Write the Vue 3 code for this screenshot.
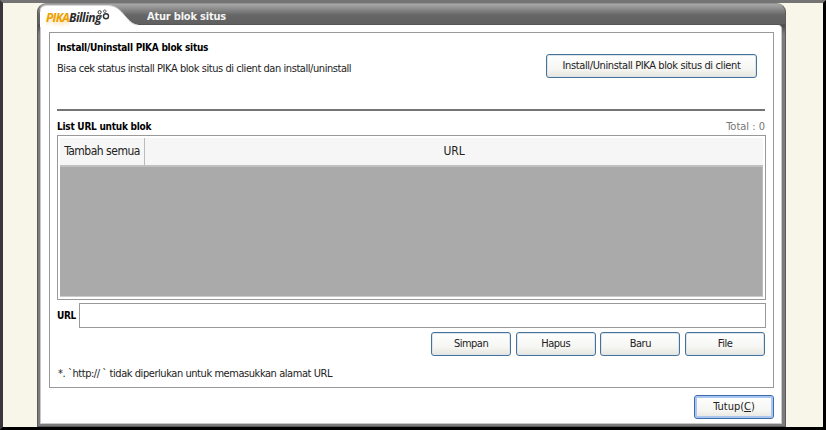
<script setup>
const actions = ['Simpan', 'Hapus', 'Baru', 'File']
</script>

<template>
  <div class="screen">
    <main class="window">
      <header class="titlebar">
        <svg class="tab" width="100" height="24" viewBox="0 0 100 24" aria-hidden="true">
          <path d="M0 24V9Q0 2.5 7 2.5H67C76 2.5 80 7 85 13C90 19 93 21.5 98 22V24Z" fill="#fff" />
          <path d="M0 9Q0 2.5 7 2.5H67C76 2.5 80 7 85 13C90 19 93 21.5 98 22" fill="none" stroke="#d8d8d8" stroke-width="1" />
        </svg>
        <div class="logo"><span class="pika">PIKA</span><span class="billing">Billing</span></div>
        <svg class="rings" width="14" height="13" viewBox="0 0 14 13" fill="none" stroke="#333" aria-hidden="true">
          <circle cx="2.6" cy="3.2" r="1.6" stroke-width="1" />
          <circle cx="7.8" cy="2.2" r="1.3" stroke="#666" stroke-width="1" />
          <circle cx="9" cy="7.3" r="2.5" stroke-width="1.4" />
          <circle cx="3.6" cy="7.4" r="1.2" stroke="#777" stroke-width="1" />
        </svg>
        <h1 class="title">Atur blok situs</h1>
      </header>
      <div class="body">
        <section class="panel">
          <div class="intro">
            <div>
              <h2>Install/Uninstall PIKA blok situs</h2>
              <p class="desc">Bisa cek status install PIKA blok situs di client dan install/uninstall</p>
            </div>
            <button class="btn install">Install/Uninstall PIKA blok situs di client</button>
          </div>
          <div class="caption">
            <h2>List URL untuk blok</h2>
            <span class="total">Total : 0</span>
          </div>
          <div class="grid">
            <div class="grid-head">
              <div class="col first">Tambah semua</div>
              <div class="col">URL</div>
            </div>
            <div class="grid-body"></div>
          </div>
          <div class="entry">
            <label for="url">URL</label>
            <input id="url" type="text" />
          </div>
          <div class="actions">
            <button v-for="a in actions" :key="a" class="btn">{{ a }}</button>
          </div>
          <p class="note">*. `http:// ` tidak diperlukan untuk memasukkan alamat URL</p>
        </section>
        <footer class="foot">
          <button class="btn close"><span>Tutup(<u>C</u>)</span></button>
        </footer>
      </div>
    </main>
  </div>
</template>

<style>
body { margin: 0; overflow: hidden; }
</style>

<style scoped>
* { box-sizing: border-box; }
h1, h2, p { margin: 0; font-size: 11px; }
.screen {
  width: 826px; height: 430px;
  background: #f8f6e8;
  border: 3px solid;
  border-color: #747474 #000 #000 #39373b;
  padding-left: 34px;
  font-family: "DejaVu Sans Condensed", "DejaVu Sans", sans-serif;
  font-stretch: condensed;
  font-size: 11px;
  color: #222;
}
.window {
  width: 749px; height: 424px;
  border-radius: 9px 9px 0 0;
  background: linear-gradient(#a8a8a8 0, #8b8b8b 5px, #666 11px, #606060 20px, #4c4848 21px, #7c7c7c 30px);
  border: 1px solid #5a5a5a;
  border-top-color: #929292;
  padding: 0 3px 2px 2px;
}
.titlebar { position: relative; height: 21px; }
.tab { position: absolute; left: 0; top: -1px; }
.logo {
  position: absolute; left: 6px; top: 6px;
  font: italic 700 12px/15px "Open Sans", sans-serif;
  font-stretch: normal;
  white-space: nowrap;
}
.pika { color: #eda000; letter-spacing: -0.75px; text-shadow: 0 3px 3px rgba(245, 190, 80, 0.4); }
.billing { color: #2c2c2c; letter-spacing: -0.5px; font-weight: 700; }
.rings { position: absolute; left: 57px; top: 5px; }
.title { padding: 5px 0 0 107px; line-height: 16px; color: #f4f4f4; font-weight: 700; letter-spacing: -0.2px; }
.body {
  height: 399px;
  background: #fff;
  border: 1px solid #c9c9c9;
  border-top: 0;
  border-radius: 0 4px 0 0;
  padding: 7px 7px 0 8px;
}
.panel {
  height: 356px;
  border: 1px solid #999;
  padding: 0 8px 0 7px;
}
.intro {
  height: 78px;
  display: flex; justify-content: space-between;
  border-bottom: 2px solid #747474;
  padding-top: 7px;
}
h2 { font-size: 10px; font-weight: 700; line-height: 15px; color: #000; white-space: nowrap; letter-spacing: -0.25px; }
.desc { margin-top: 6px; line-height: 15px; white-space: nowrap; letter-spacing: -0.44px; }
.btn {
  width: 80px; height: 24px;
  padding: 0 0 2px;
  border: 1px solid #467299;
  border-radius: 3px;
  background: linear-gradient(#fff, #f5f5f2 65%, #e6e5de);
  box-shadow: inset 0 0 0 1px #dce5ec;
  font: inherit;
  letter-spacing: -0.5px;
  color: #222;
  white-space: nowrap;
}
.install { width: 211px; margin: 14px 8px 0 0; letter-spacing: -0.38px; }
.caption { height: 24px; display: flex; justify-content: space-between; padding-top: 8px; line-height: 15px; }
.total { color: #777; }
.grid {
  height: 165px; width: 709px;
  border: 1px solid #999;
  padding: 2px;
}
.grid-head { display: flex; height: 29px; background: #f6f6f6; border-bottom: 2px solid #c0c0c0; }
.col { flex: 1; display: flex; align-items: center; justify-content: center; padding-bottom: 1px; font-size: 12px; letter-spacing: -0.1px; }
.first { flex: 0 0 85px; border-right: 1px solid #bbb; letter-spacing: -0.5px; }
.grid-body { height: 130px; background: #aaa; border-right: 1px solid #bbb; border-bottom: 1px solid #ccc; }
.entry { display: flex; align-items: center; height: 25px; width: 709px; margin-top: 3px; }
.entry label { width: 22px; font-weight: 700; color: #000; font-size: 10px; letter-spacing: -0.4px; }
.entry input { width: 687px; height: 25px; border: 1px solid #999; background: #fff; }
.actions { display: flex; justify-content: flex-end; gap: 4.67px; margin-top: 4px; }
.note { margin-top: 10px; line-height: 15px; padding-left: 1px; white-space: nowrap; letter-spacing: -0.44px; }
.foot { display: flex; justify-content: flex-end; padding-top: 7px; }
.close { border-color: #3d6cab; box-shadow: inset 0 0 0 2px #a9c5f0; letter-spacing: 0; }
</style>
